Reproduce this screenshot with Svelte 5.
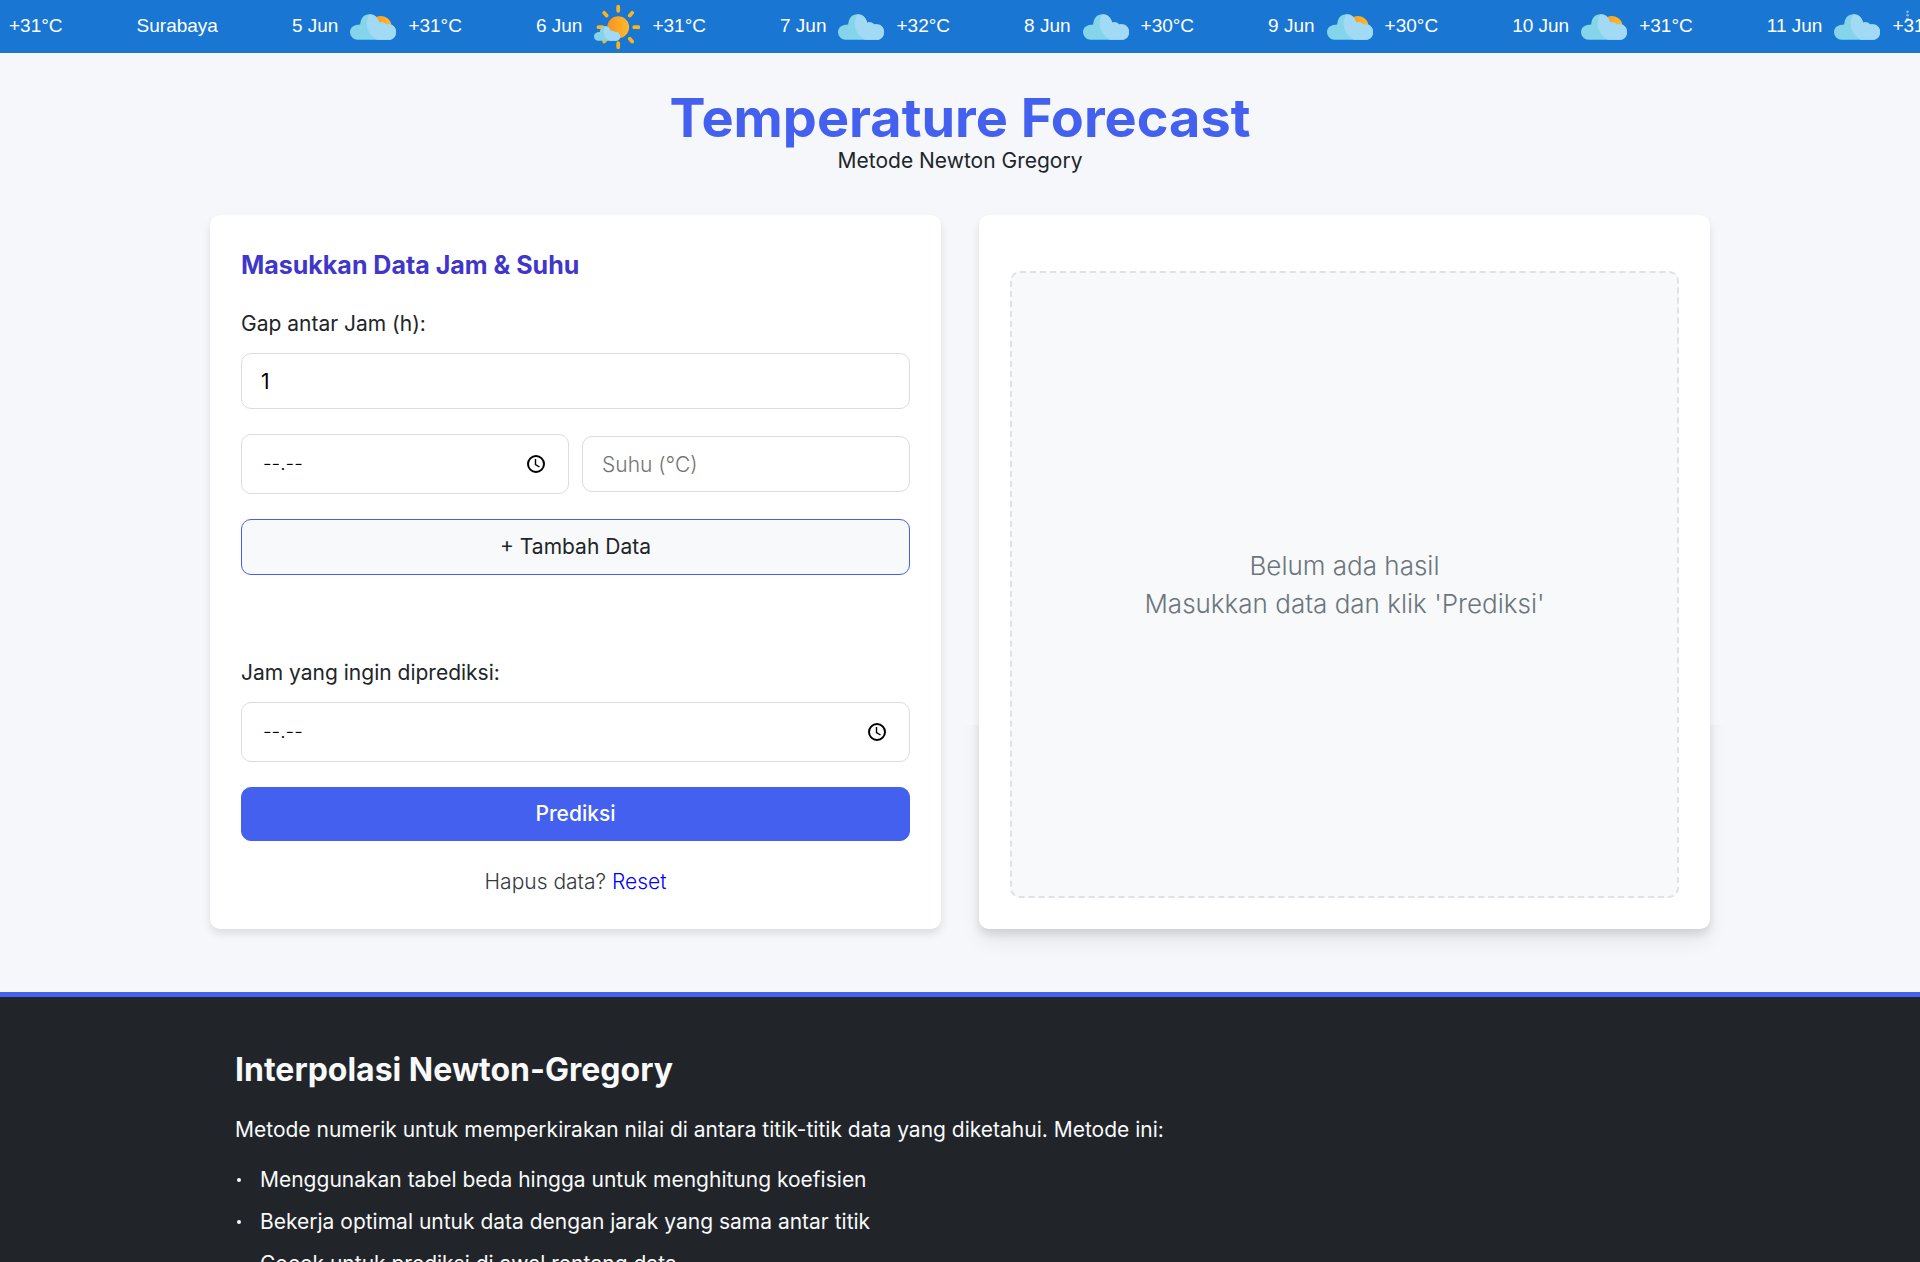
<script>
  const forecast = [
    { date: '5 Jun', icon: 'partly', temp: '+31°C' },
    { date: '6 Jun', icon: 'sunny', temp: '+31°C' },
    { date: '7 Jun', icon: 'cloudy', temp: '+32°C' },
    { date: '8 Jun', icon: 'cloudy', temp: '+30°C' },
    { date: '9 Jun', icon: 'partly', temp: '+30°C' },
    { date: '10 Jun', icon: 'partly', temp: '+31°C' },
    { date: '11 Jun', icon: 'cloudy', temp: '+31°C' }
  ];

  const points = [
    'Menggunakan tabel beda hingga untuk menghitung koefisien',
    'Bekerja optimal untuk data dengan jarak yang sama antar titik',
    'Cocok untuk prediksi di awal rentang data'
  ];

  let gap = $state(1);
  let hour = $state('--.--');
  let temperature = $state('');
  let target = $state('--.--');

  function reset(event) {
    event.preventDefault();
    gap = 1;
    hour = '--.--';
    temperature = '';
    target = '--.--';
  }
</script>

{#snippet cloud()}
  <path
    fill="#84d4ea"
    d="M22 105A22 22 0 0 1 0 83C0 68 12 60 30 60C31 42 41 30 57 30C72 30 82 40 86 55C93 52 101 54 106 60C124 57 135 67 135 82C135 96 127 105 113 105Z"
  />
  <path
    fill="#a2daf6"
    d="M57 30C72 30 82 40 86 55C93 52 101 54 106 60C124 57 135 67 135 82C135 96 127 105 113 105H79C52 90 40 58 57 30Z"
  />
{/snippet}

{#snippet clock()}
  <svg class="clock" viewBox="0 0 20 20" aria-hidden="true">
    <circle cx="10" cy="10" r="8" fill="none" stroke="#000" stroke-width="2" />
    <path d="M9.5 5v5.5l4 2.5" fill="none" stroke="#000" stroke-width="1.4" />
  </svg>
{/snippet}

<div class="ticker">
  <span>+31°C</span>
  <span>Surabaya</span>
  {#each forecast as day}
    <div class="day">
      <span>{day.date}</span>
      <svg class="weather" viewBox="0 0 135 135" aria-hidden="true">
        <defs>
          <linearGradient id="sun" x1="0" x2="1" y1="0" y2="0">
            <stop offset="0" stop-color="#f8931f" />
            <stop offset="1" stop-color="#ffb92d" />
          </linearGradient>
        </defs>
        {#if day.icon === 'sunny'}
          <path
            d="M71 8v12M71 115v12M118 68h12M13 68h12M30 26l7 8M112 26l-7 8M105 102l7 8M37 102l-7 8"
            stroke="#fdb515"
            stroke-width="11"
            stroke-linecap="round"
          />
          <circle cx="71" cy="68" r="32" fill="url(#sun)" />
          <g transform="translate(0 48) scale(.57)">{@render cloud()}</g>
        {:else}
          {#if day.icon === 'partly'}
            <circle cx="90" cy="67" r="32" fill="url(#sun)" />
          {/if}
          {@render cloud()}
        {/if}
      </svg>
      <span>{day.temp}</span>
    </div>
  {/each}
  <button class="more" aria-label="Menu">
    <svg viewBox="0 0 6 14" aria-hidden="true">
      <circle cx="3" cy="2" r="1.5" /><circle cx="3" cy="6" r="1.5" /><circle cx="3" cy="11" r="2" />
    </svg>
  </button>
</div>

<main>
  <header>
    <h1>Temperature Forecast</h1>
    <p>Metode Newton Gregory</p>
  </header>

  <div class="cards">
    <section class="card">
      <h2>Masukkan Data Jam &amp; Suhu</h2>
      <label for="gap">Gap antar Jam (h):</label>
      <input id="gap" class="box" type="number" bind:value={gap} />
      <div class="row">
        <div class="box time">
          <input type="text" aria-label="Jam" bind:value={hour} />
          {@render clock()}
        </div>
        <input class="box" type="number" aria-label="Suhu" placeholder="Suhu (°C)" bind:value={temperature} />
      </div>
      <button class="add" type="button">+ Tambah Data</button>
      <label class="target" for="target">Jam yang ingin diprediksi:</label>
      <div class="box time">
        <input id="target" type="text" bind:value={target} />
        {@render clock()}
      </div>
      <button class="predict" type="button">Prediksi</button>
      <p class="reset">Hapus data? <a href="#reset" onclick={reset}>Reset</a></p>
    </section>

    <section class="card result">
      <div class="empty">
        <p>Belum ada hasil</p>
        <p>Masukkan data dan klik 'Prediksi'</p>
      </div>
    </section>
  </div>
</main>

<footer>
  <div class="inner">
    <h2>Interpolasi Newton-Gregory</h2>
    <p>Metode numerik untuk memperkirakan nilai di antara titik-titik data yang diketahui. Metode ini:</p>
    <ul>
      {#each points as point}
        <li>{point}</li>
      {/each}
    </ul>
  </div>
</footer>

<style>
  :global(body) {
    margin: 0;
    background: #f5f7fb;
    color: #212529;
    font-family: Inter, 'Open Sans', sans-serif;
    font-size: 21px;
    line-height: 32px;
  }

  h1,
  h2,
  p,
  ul {
    margin: 0;
    padding: 0;
  }

  input,
  button {
    box-sizing: border-box;
    font: inherit;
  }

  .ticker {
    position: relative;
    display: flex;
    align-items: center;
    gap: 74px;
    height: 53px;
    padding-left: 9px;
    overflow: hidden;
    background: #1976d2;
    color: #fff;
    font-family: 'Liberation Sans', Arial, sans-serif;
    font-size: 19px;
    line-height: 24px;
    white-space: nowrap;
  }

  .ticker > * {
    flex: none;
  }

  .ticker span {
    padding-bottom: 2px;
  }

  .day {
    display: flex;
    align-items: center;
    gap: 12px;
  }

  .weather {
    width: 46px;
    height: 46px;
  }

  .more {
    position: absolute;
    top: 10px;
    right: 10px;
    padding: 0;
    border: 0;
    background: none;
    opacity: 0.5;
  }

  .more svg {
    display: block;
    width: 5px;
    height: 12px;
    fill: #fff;
  }

  main {
    max-width: 1500px;
    margin: 0 auto;
    padding: 38px 20px 63px;
  }

  header {
    margin-bottom: 38px;
    text-align: center;
  }

  h1 {
    color: #4361ee;
    font-size: 54px;
    font-weight: 700;
    line-height: 54px;
  }

  .cards {
    display: grid;
    grid-template-columns: minmax(0, 1fr) minmax(0, 1fr);
    gap: 38px;
  }

  .card {
    display: flex;
    flex-direction: column;
    padding: 31px;
    border-radius: 10px;
    background: #fff;
    box-shadow: 0 5px 8px rgba(0, 0, 0, 0.1);
  }

  .card h2 {
    margin-bottom: 24px;
    color: #3f37c9;
    font-size: 25px;
    font-weight: 700;
    line-height: 38px;
  }

  label {
    margin-bottom: 13px;
  }

  .box {
    width: 100%;
    height: 56px;
    padding: 0 19px;
    border: 1px solid #dcdcdc;
    border-radius: 10px;
    background: #fff;
    color: #000;
  }

  .box::placeholder {
    color: #757575;
    font-weight: 300;
  }

  input[type='number'] {
    appearance: textfield;
  }

  .row {
    display: grid;
    grid-template-columns: minmax(0, 1fr) minmax(0, 1fr);
    align-items: center;
    gap: 13px;
    margin: 25px 0;
  }

  .time {
    display: flex;
    align-items: center;
    box-sizing: border-box;
    height: 60px;
    padding: 0 22px 0 21px;
  }

  .time input {
    flex: 1;
    min-width: 0;
    padding: 0;
    border: 0;
    outline: 0;
    background: none;
    color: #000;
    font-size: 19px;
    font-weight: 300;
  }

  .clock {
    width: 20px;
    height: 20px;
  }

  button {
    cursor: pointer;
  }

  .add,
  .predict {
    height: 56px;
    border: 1px solid #4361ee;
    border-radius: 10px;
    background: #f8f9fa;
    color: #212529;
  }

  .target {
    margin-top: 82px;
  }

  .predict {
    height: 54px;
    margin-top: 25px;
    background: #4361ee;
    color: #fff;
    font-weight: 500;
  }

  .reset {
    margin-top: 25px;
    color: #343a40;
    font-weight: 300;
    text-align: center;
  }

  .reset a {
    color: #00f;
    text-decoration: none;
  }

  .result {
    position: relative;
    padding-top: 56px;
  }

  .result::before {
    content: '';
    position: absolute;
    z-index: -1;
    inset: 0;
    border-radius: 10px;
    box-shadow: 0 12px 19px rgba(0, 0, 0, 0.07);
    clip-path: inset(71.4% -40px -40px -40px);
  }

  .empty {
    display: flex;
    flex: 1;
    flex-direction: column;
    align-items: center;
    justify-content: center;
    border: 2px dashed #dee2e6;
    border-radius: 10px;
    background: #f8f9fa;
    color: #6c757d;
    font-size: 26px;
    font-weight: 300;
    line-height: 38px;
  }

  footer {
    padding: 49px 20px 50px;
    border-top: 5px solid #4361ee;
    background: #212529;
    color: #f8f9fa;
  }

  .inner {
    max-width: 1450px;
    margin: 0 auto;
  }

  footer h2 {
    margin-bottom: 20px;
    font-size: 32px;
    font-weight: 700;
    line-height: 48px;
  }

  ul {
    display: flex;
    flex-direction: column;
    gap: 10px;
    margin-top: 18px;
    list-style: none;
  }

  li {
    display: flex;
    align-items: center;
    gap: 19px;
  }

  li::before {
    content: '';
    width: 4px;
    height: 4px;
    margin-left: 2px;
    border-radius: 50%;
    background: #f8f9fa;
  }
</style>
